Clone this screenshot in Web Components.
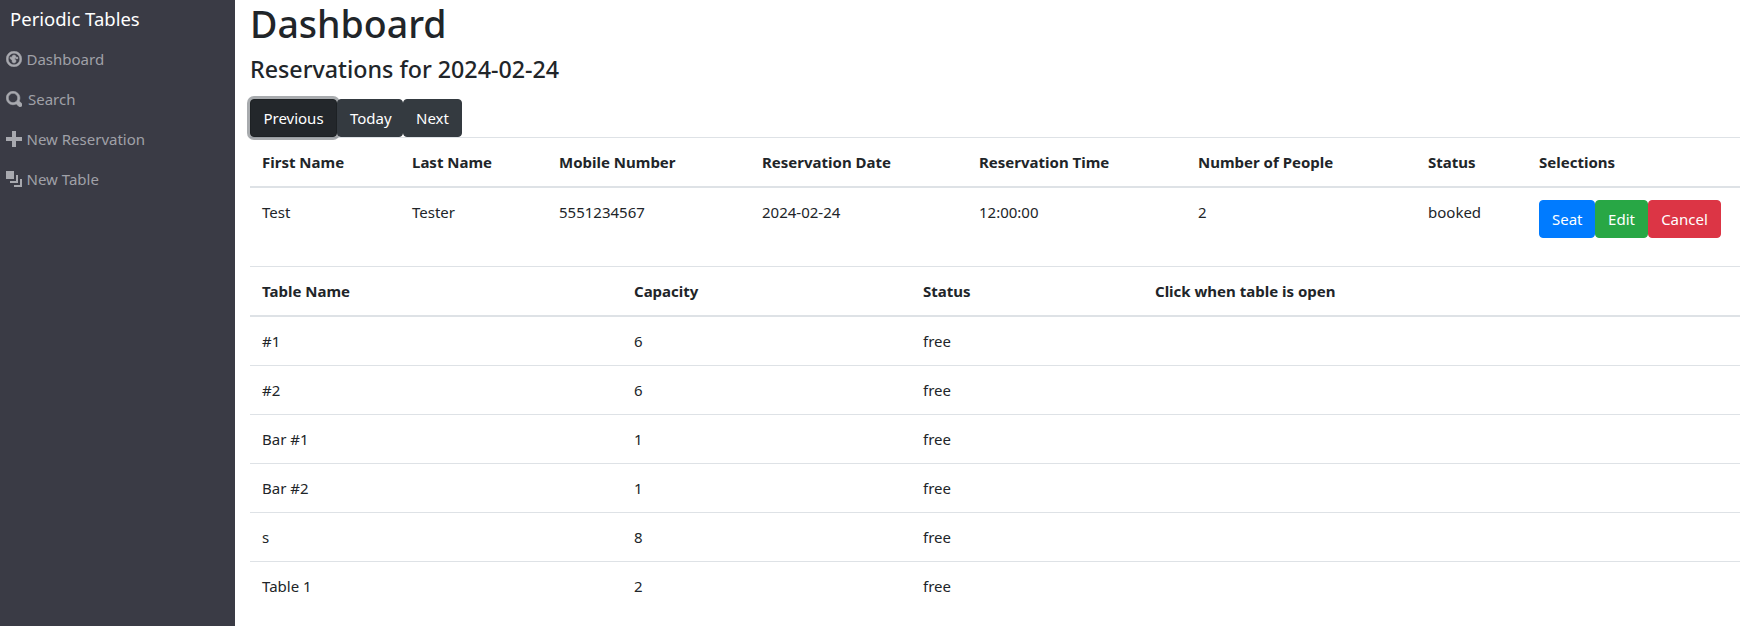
<!DOCTYPE html>
<html>
<head>
<meta charset="utf-8">
<title>Periodic Tables</title>
<style>
    html, body { margin: 0; background: #fff; }
    body {
        font-family: "Noto Sans", "Open Sans", sans-serif;
        font-size: 15px;
        color: #212529;
    }
</style>
</head>
<body>
<app-shell>
    <side-bar slot="side" brand="Periodic Tables">
        <nav-item icon="dashboard">Dashboard</nav-item>
        <nav-item icon="search" gap="6">Search</nav-item>
        <nav-item icon="plus">New Reservation</nav-item>
        <nav-item icon="layers">New Table</nav-item>
    </side-bar>
    <dash-board></dash-board>
</app-shell>

<script>
const shellTemplate = document.createElement('template');
shellTemplate.innerHTML = /*html*/`
<style>
    :host { display: flex; align-items: flex-start; width: 1740px; height: 640px; }
    main { flex: 1; min-width: 0; padding: 0 0 0 15px; }
</style>
<slot name="side"></slot>
<main><slot></slot></main>
`;
class AppShell extends HTMLElement {
    constructor() {
        super();
        this.attachShadow({ mode: 'open' });
        this.shadowRoot.appendChild(shellTemplate.content.cloneNode(true));
    }
}
customElements.define('app-shell', AppShell);

const sideTemplate = document.createElement('template');
sideTemplate.innerHTML = /*html*/`
<style>
    :host {
        display: block;
        flex: none;
        box-sizing: border-box;
        width: 235px;
        height: 626px;
        background: #3a3b45;
    }
    .brand {
        display: block;
        height: 39px;
        padding-left: 10px;
        font-size: 18.5px;
        line-height: 38px;
        color: #fff;
    }
    nav { display: flex; flex-direction: column; }
</style>
<span class="brand"></span>
<nav><slot></slot></nav>
`;
class SideBar extends HTMLElement {
    constructor() {
        super();
        this.attachShadow({ mode: 'open' });
        this.shadowRoot.appendChild(sideTemplate.content.cloneNode(true));
        this.shadowRoot.querySelector('.brand').textContent = this.getAttribute('brand');
    }
}
customElements.define('side-bar', SideBar);

// open-iconic style glyphs, 8x8 grid
const icons = {
    dashboard: '<path stroke="#a8a9af" stroke-width=".25" d="M4 .12C1.85.12.12 1.85.12 4S1.85 7.88 4 7.88 7.88 6.15 7.88 4 6.15.12 4 .12zm0 1c1.6 0 2.88 1.28 2.88 2.88S5.6 6.88 4 6.88 1.12 5.6 1.12 4 2.4 1.12 4 1.12zM4 2c-.55 0-1 .45-1 1s.45 1 1 1 1-.45 1-1-.45-1-1-1zM2.34 3a.5.5 0 0 0-.19.84l.91.91c-.02.08-.06.16-.06.25 0 .55.45 1 1 1s1-.45 1-1-.45-1-1-1c-.09 0-.17.04-.25.06l-.91-.91A.5.5 0 0 0 2.34 3zM5.5 3c-.28 0-.5.22-.5.5s.22.5.5.5.5-.22.5-.5-.22-.5-.5-.5z"/>',
    search: '<path stroke="#a8a9af" stroke-width=".3" d="M3.5.15C1.65.15.15 1.65.15 3.5S1.65 6.85 3.5 6.85c.59 0 1.17-.14 1.66-.41a1 1 0 0 0 .13.13l1 1a1.02 1.02 0 1 0 1.44-1.44l-1-1a1 1 0 0 0-.16-.13c.27-.49.38-1.06.38-1.5C6.95 1.65 5.35.15 3.5.15zm0 1C4.8 1.15 5.85 2.2 5.85 3.5c0 .62-.22 1.2-.6 1.62l-.03.03a1 1 0 0 0-.13.13c-.42.37-.98.57-1.59.57-1.3 0-2.35-1.05-2.35-2.35S2.2 1.15 3.5 1.15z"/>',
    plus: '<path d="M3 0v3H0v2h3v3h2V5h3V3H5V0H3z"/>',
    layers: '<path d="M0 0v4h4V0H0zm5 2v3H2v1h4V2H5zm2 2v3H4v1h4V4H7z"/>'
};

const navTemplate = document.createElement('template');
navTemplate.innerHTML = /*html*/`
<style>
    :host {
        display: flex;
        align-items: center;
        box-sizing: border-box;
        height: 40px;
        padding-left: 6px;
        color: #a0a1a8;
        font-size: 15px;
    }
    svg { width: 16px; height: 16px; flex: none; fill: #a8a9af; margin-right: 4.5px; }
</style>
<svg viewBox="0 0 8 8"></svg>
<slot></slot>
`;
class NavItem extends HTMLElement {
    constructor() {
        super();
        this.attachShadow({ mode: 'open' });
        this.shadowRoot.appendChild(navTemplate.content.cloneNode(true));
        const svg = this.shadowRoot.querySelector('svg');
        svg.innerHTML = icons[this.getAttribute('icon')];
        if (this.hasAttribute('gap')) svg.style.marginRight = this.getAttribute('gap') + 'px';
    }
}
customElements.define('nav-item', NavItem);

const btnTemplate = document.createElement('template');
btnTemplate.innerHTML = /*html*/`
<style>
    :host { display: inline-block; }
    button {
        display: block;
        box-sizing: border-box;
        font: inherit;
        height: 38px;
        padding: 0 12px;
        color: #fff;
        border: 1px solid var(--btn, #343a40);
        border-radius: 4px;
        background: var(--btn, #343a40);
        text-align: center;
    }
    :host([focused]) button {
        background: #23272b;
        border-color: #1d2124;
        box-shadow: 0 0 0 3px rgba(82,88,93,.5);
    }
</style>
<button type="button"><slot></slot></button>
`;
class UiButton extends HTMLElement {
    constructor() {
        super();
        this.attachShadow({ mode: 'open' });
        this.shadowRoot.appendChild(btnTemplate.content.cloneNode(true));
        if (this.hasAttribute('w')) this.shadowRoot.querySelector('button').style.width = this.getAttribute('w') + 'px';
    }
}
customElements.define('ui-button', UiButton);

const tableTemplate = document.createElement('template');
tableTemplate.innerHTML = /*html*/`
<style>
    :host { display: block; }
    table { width: 100%; border-collapse: collapse; table-layout: fixed; }
    th, td { padding: 12px; text-align: left; vertical-align: top; line-height: 24px; }
    th { font-weight: 700; border-top: 1px solid #dee2e6; border-bottom: 2px solid #dee2e6; }
    td { border-top: 1px solid #dee2e6; }
    tbody tr:first-child td { border-top: 0; }
    .actions { display: flex; margin-bottom: 16px; }
</style>
<table><colgroup></colgroup><thead><tr></tr></thead><tbody></tbody></table>
<slot></slot>
`;
class DataTable extends HTMLElement {
    constructor() {
        super();
        this.attachShadow({ mode: 'open' });
        this.shadowRoot.appendChild(tableTemplate.content.cloneNode(true));
    }
    set config({ widths, heads, rows }) {
        const root = this.shadowRoot;
        root.querySelector('colgroup').innerHTML = widths.map(w => `<col style="width:${w}px">`).join('');
        root.querySelector('thead tr').innerHTML = heads.map(h => `<th>${h}</th>`).join('');
        root.querySelector('tbody').innerHTML = rows.map(r =>
            `<tr>${r.map(c => `<td>${c}</td>`).join('')}</tr>`).join('');
    }
}
customElements.define('data-table', DataTable);

const boardTemplate = document.createElement('template');
boardTemplate.innerHTML = /*html*/`
<style>
    :host { display: block; color: #212529; }
    h1 { margin: 0; font-size: 37.5px; font-weight: 500; line-height: 48px; }
    h4 { margin: 7px 0 0; font-size: 23.25px; font-weight: 500; line-height: 29px; }
    .nav { display: flex; margin-top: 15px; height: 38px; }
</style>
<h1>Dashboard</h1>
<h4>Reservations for 2024-02-24</h4>
<div class="nav">
    <ui-button focused w="87">Previous</ui-button>
    <ui-button w="66">Today</ui-button>
    <ui-button w="59">Next</ui-button>
</div>
<data-table id="reservations"></data-table>
<data-table id="tables"></data-table>
`;
class DashBoard extends HTMLElement {
    constructor() {
        super();
        this.attachShadow({ mode: 'open' });
        this.shadowRoot.appendChild(boardTemplate.content.cloneNode(true));
        const actions = `<div class="actions"><ui-button w="56" style="--btn:#007bff">Seat</ui-button><ui-button w="53" style="--btn:#28a745">Edit</ui-button><ui-button w="73" style="--btn:#dc3545">Cancel</ui-button></div>`;
        this.shadowRoot.querySelector('#reservations').config = {
            widths: [150, 147, 203, 217, 219, 230, 111, 213],
            heads: ['First Name', 'Last Name', 'Mobile Number', 'Reservation Date', 'Reservation Time', 'Number of People', 'Status', 'Selections'],
            rows: [['Test', 'Tester', '5551234567', '2024-02-24', '12:00:00', '2', 'booked', actions]]
        };
        this.shadowRoot.querySelector('#tables').config = {
            widths: [372, 289, 232, 597],
            heads: ['Table Name', 'Capacity', 'Status', 'Click when table is open'],
            rows: [
                ['#1', '6', 'free', ''],
                ['#2', '6', 'free', ''],
                ['Bar #1', '1', 'free', ''],
                ['Bar #2', '1', 'free', ''],
                ['s', '8', 'free', ''],
                ['Table 1', '2', 'free', '']
            ]
        };
    }
}
customElements.define('dash-board', DashBoard);
</script>
</body>
</html>
